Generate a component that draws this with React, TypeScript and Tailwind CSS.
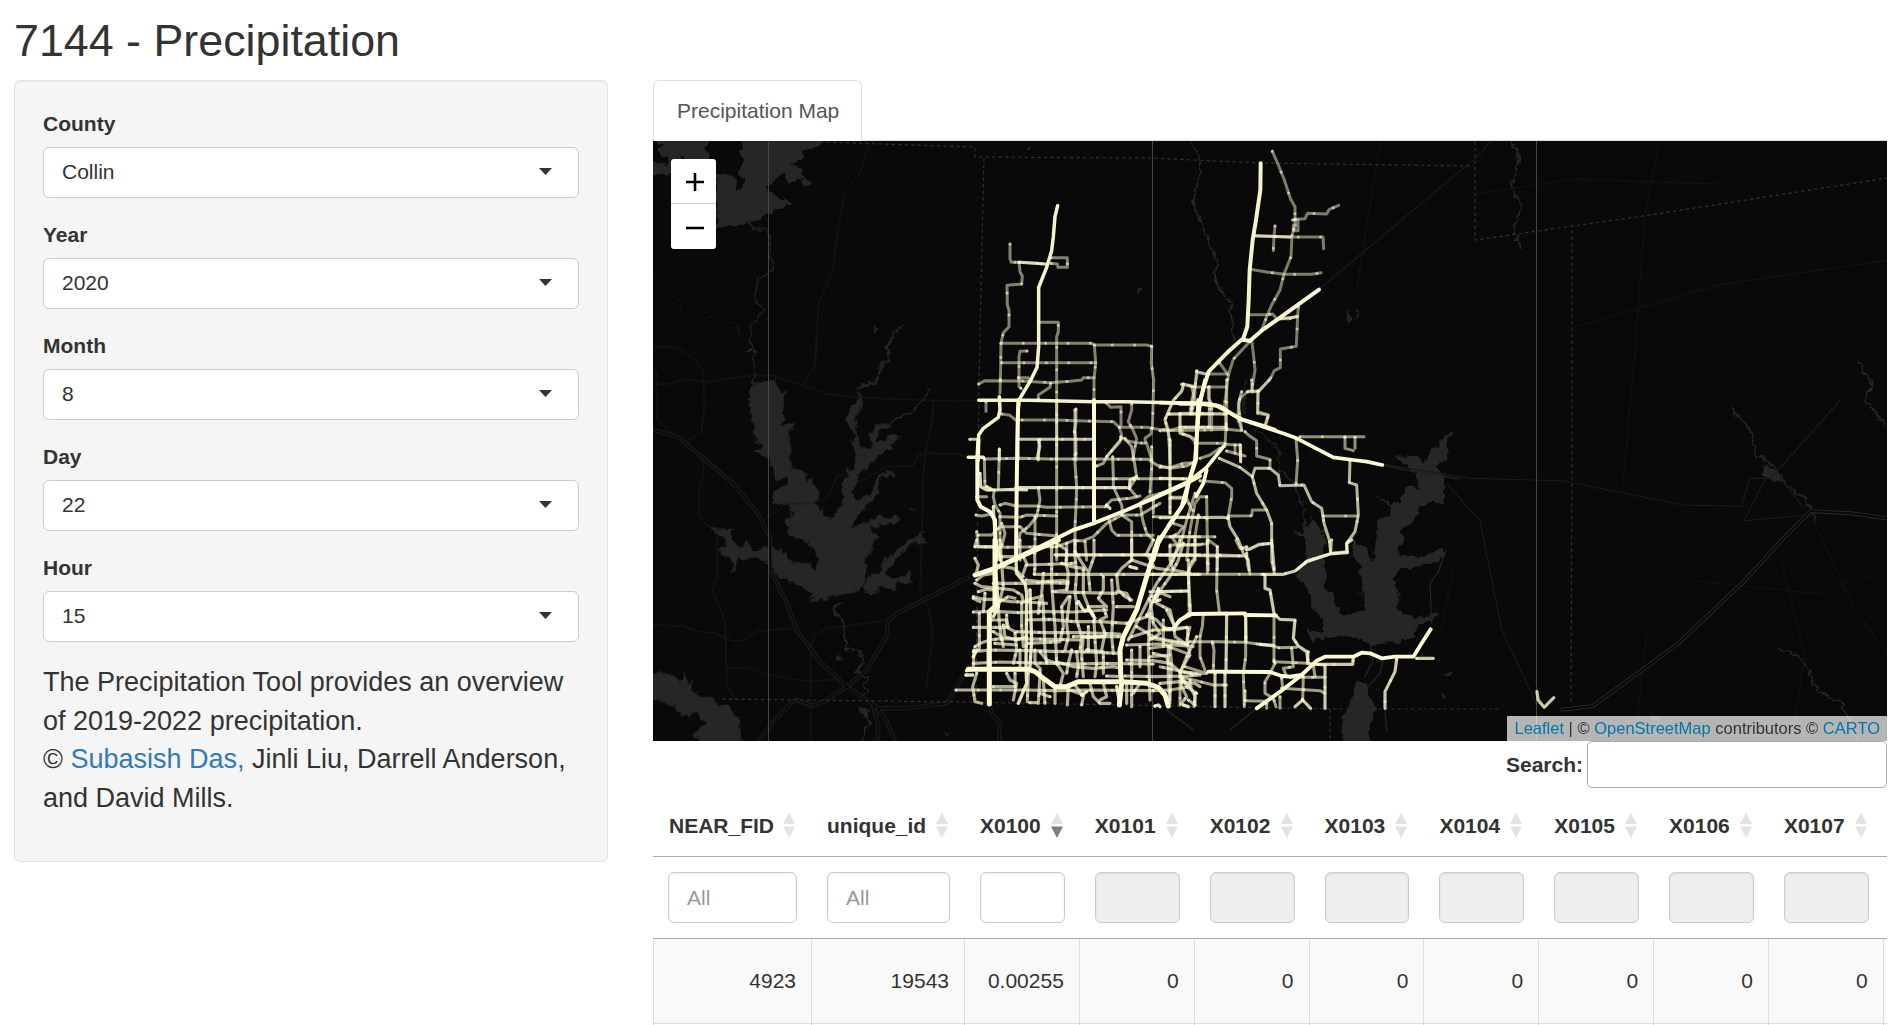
import React from "react";

type Pts = string[];

const Lines = ({ pts, w, o = 1, dots = false, color = "#fdfbd4" }: { pts: Pts; w: number; o?: number; dots?: boolean; color?: string }) => (
  <>
    {pts.map((p, i) => (
      <g key={i} fill="none" stroke={color} strokeLinecap="round" strokeLinejoin="round" strokeWidth={w}>
        <polyline points={p} opacity={o} />
        {dots && <polyline points={p} opacity={0.6} strokeDasharray="0 67" />}
      </g>
    ))}
  </>
);

/* Each tile has its own origin and a 1/3 px unit. */
const Tile = ({ x, y, children }: { x: number; y: number; children: React.ReactNode }) => (
  <g transform={`translate(${x} ${y}) scale(0.33333)`}>{children}</g>
);

/* North-west: Celina and Prosper, origin 950,180 */
const nwMinor: Pts = [
  "180,192 180,236 184,247 207,247 240,248 262,250 285,252",
  "303,233 352,233 352,262 324,262 322,252 300,250",
  "207,247 210,275 217,288 215,312 171,316 172,375 177,390 177,440 160,458 153,490 152,560 150,640",
  "267,427 325,427 325,455 320,470 320,840",
  "153,490 260,490 425,490 435,495 590,495 605,499",
  "605,499 604,550 611,600 610,650 607,745",
  "155,548 437,548",
  "433,495 437,548 432,600 432,660",
  "86,612 105,602 215,603 300,608 360,604 395,600 400,593 432,593",
  "231,513 210,514 207,530 207,620 214,626",
  "205,593 235,593 240,606",
  "302,610 300,622 265,645 265,658",
  "108,665 108,694",
  "155,702 180,706 197,720 318,720 378,722 490,725 508,742 515,765 510,785 470,830",
  "378,687 378,730 373,755 378,775 378,840",
  "468,668 482,682 513,680 513,735",
  "508,742 590,742 625,748 665,750 690,742 780,742",
  "545,672 545,690 535,725 548,748 560,775 548,840",
  "512,770 530,782 560,788 590,790 605,840",
  "605,745 603,762 585,775 587,788",
  "740,572 735,620 700,612 698,628 668,665 645,718 655,750 660,840",
  "660,702 780,702",
  "690,702 690,758 718,768 740,780",
  "735,620 735,640 725,670 720,700",
  "740,575 765,582",
];
const nwMid: Pts = [
  "60,778 85,778",
  "203,778 432,778",
  "268,782 265,840",
  "148,807 148,840",
  "207,247 285,252",
];
const nwMajor: Pts = [
  "323,77 315,110 310,170 305,212 290,262 266,322 266,500 261,562 240,605 208,658 203,700 203,840",
  "86,661 240,661 430,665 530,665 664,668 780,671",
  "148,650 150,690 145,712 100,745 86,765 85,840",
  "432,665 432,840",
  "55,832 100,832",
];

/* North-east: Anna and Melissa, origin 1180,140 */
const neMinor: Pts = [
  "277,34 295,75 313,120 332,178 345,200 345,260 336,285 333,350 312,402 300,450 275,495 262,525 245,570",
  "345,238 375,236 383,220 440,222 448,208 476,196",
  "338,240 354,240 354,272 340,272 340,255 352,255",
  "285,258 282,290 280,332",
  "221,287 330,291 429,291 431,326",
  "211,388 260,396 313,403 395,403 423,398",
  "203,524 260,524 278,522 290,536 330,536 352,528",
  "355,500 353,528 349,619 301,627 301,683 283,692 270,718 236,753",
  "215,600 220,640 225,690 215,752",
  "236,753 205,753 180,775 172,830 185,870",
  "233,753 233,820 265,826 258,855",
  "209,605 160,658 145,705 138,760 133,800 140,870",
  "118,668 145,705",
  "84,702 52,697 45,740 35,780 35,820",
  "85,702 140,702",
  "5,733 45,741 138,741",
  "0,820 60,820 138,822",
  "85,742 85,775 95,790 95,870",
];
const neMid: Pts = ["221,287 330,291", "300,536 352,530", "245,570 300,535", "0,862 140,862"];
const neMajor: Pts = [
  "242,70 241,150 228,240 218,300 209,390 206,480 202,560 190,595 150,630 118,662 86,695 75,730 62,775 55,820 52,870",
  "417,449 350,497 300,533 245,572 210,602 190,600",
  "0,791 60,791 110,797 138,812 185,838 250,858 285,870",
];

/* Central Frisco and McKinney, origin 940,380 */
const ceMinor: Pts = [
  "133,237 135,320",
  "178,210 175,325",
  "133,237 240,235 330,237 460,237 625,238 650,255 690,265 740,258 765,245",
  "350,60 350,540",
  "405,90 405,250 410,320 408,380 405,440 405,520",
  "295,180 300,200 290,235",
  "163,330 160,350 165,375 180,400 180,540",
  "228,378 290,378 320,382 500,380",
  "180,375 195,370 228,378",
  "295,325 300,360 290,410 265,440 240,460 235,500",
  "285,410 285,520",
  "180,410 240,412 260,405 350,408",
  "115,465 155,465 180,440 240,440 260,460 350,468",
  "110,455 115,500 165,502 350,500",
  "108,405 125,408 155,402",
  "518,230 520,290 520,320 545,375 548,400",
  "470,258 490,250 500,230 545,175",
  "555,175 575,200 582,240 590,290 568,325 590,350",
  "500,375 515,360 570,355 600,348",
  "635,200 635,260 630,340",
  "690,180 690,400",
  "462,296 740,296",
  "602,380 608,420 620,460 640,480",
  "640,410 780,412",
  "505,412 515,450 530,466 640,466",
  "600,370 625,350 700,330 740,310",
  "545,405 575,425 575,540",
  "350,500 400,482 430,482 460,470 500,430 545,405 600,405 660,370",
  "345,524 780,524",
  "380,490 380,540",
  "435,485 440,540",
  "695,352 730,352",
  "765,340 740,420 720,500 695,540",
  "700,430 730,440 715,460 695,470 715,500",
  "655,470 780,470",
  "690,495 780,495",
  "110,350 140,350",
  "185,430 195,460 185,500",
  "640,360 640,400",
];
const ceMid: Pts = [
  "120,280 122,320 140,330 165,330 225,328 260,330",
  "228,323 560,323",
  "568,325 570,300 590,290",
  "160,380 165,470 180,540",
  "500,375 510,385",
  "140,320 155,328",
];
const ceMajor: Pts = [
  "115,180 112,232 112,360 122,380 150,395 165,420 168,540",
  "235,60 232,180 230,330 228,540",
  "462,60 462,430",
  "780,288 740,310 640,355 560,390 460,430 400,450 300,500 215,540",
  "775,60 770,180 768,240 745,310 725,380 690,430 655,490 640,540",
];

/* East: McKinney, Princeton, origin 1160,380 */
const eaMinor: Pts = [
  "70,12 65,35 40,60 15,120 30,180 30,400",
  "95,20 105,60 95,95",
  "25,102 200,102",
  "60,102 60,160 90,170 105,185",
  "0,152 130,150 200,148 245,152",
  "148,20 148,140",
  "200,0 200,102 195,200",
  "245,35 235,70 240,110 245,150",
  "263,35 295,35 293,95 325,105 315,135",
  "327,0 298,32",
  "275,0 277,35",
  "105,190 195,190",
  "195,193 242,195 242,245",
  "200,213 255,228",
  "225,195 225,220",
  "255,155 265,165 290,182 290,228 330,238 330,265",
  "120,302 195,308 215,325 215,350 205,410",
  "140,350 120,350 105,370 90,450 80,540",
  "140,350 142,490 145,570",
  "205,408 275,407 277,390 320,390",
  "30,355 80,355 95,390",
  "420,170 520,170 612,170",
  "490,408 592,408",
  "408,175 413,240 408,315",
  "585,172 585,205",
  "555,172 555,205 580,212",
  "180,525 245,527",
  "245,505 270,508 295,493 335,490",
  "145,480 172,500 172,570",
  "30,470 165,470",
  "60,495 135,492 145,490",
  "0,525 180,525",
  "115,405 105,470 105,540 85,570",
  "0,262 30,262 70,250 100,248",
  "120,235 150,225 180,205",
];
const eaMid: Pts = [
  "178,235 240,262 277,290 290,340 320,390 335,430 335,480 343,570",
  "277,290 285,265 330,265 355,285 360,317 432,315 455,365 485,385 492,430 508,480 512,520",
  "570,240 568,308 590,315 595,405 585,455 560,490 560,515 515,520 440,543 410,570",
  "205,415 210,440 235,480 250,520 265,540 268,570",
  "0,295 85,297",
  "0,413 190,412 205,415",
  "240,195 242,245",
];
const eaMajor: Pts = [
  "0,68 140,71 180,78 235,115 310,140 375,162 410,175 520,232 580,240 620,245 667,255",
  "135,0 120,70 112,140 105,240 88,300 75,365 40,420 0,475",
  "0,343 85,305 140,262 190,200",
  "140,270 130,310 108,350",
];

/* Plano and north Dallas, origin 940,540 */
const plMinor: Pts = [
  "105,20 160,20", "110,0 105,20", "105,55 115,75 110,95",
  "180,0 185,70 190,140 175,200 178,250 185,300",
  "110,120 130,105 160,100",
  "105,130 125,140 180,145 220,150 245,165 250,185",
  "160,130 260,130 330,128 380,130",
  "115,155 140,148 160,150",
  "100,170 130,178 160,178 215,185 260,186 320,190",
  "100,216 160,214 240,218 300,214 400,216 500,210",
  "100,262 200,262 225,275 320,278 420,278 540,282",
  "105,320 120,310 150,300 180,296 350,298 420,300",
  "100,335 150,330 270,332 340,334 440,336 540,340",
  "100,370 180,366 330,370 420,372 480,370 640,372",
  "48,450 260,450 350,452 440,450 640,452",
  "102,330 100,385", "110,400 98,440 105,485 125,490",
  "118,220 118,330", "135,160 130,215", "100,175 120,185",
  "190,80 220,85 250,110", "185,50 250,50 260,70 250,100",
  "240,0 240,60", "260,75 350,72 400,70",
  "283,20 285,80 283,100", "283,103 640,103", "310,100 305,160 310,200 315,330 320,370",
  "335,20 335,70 335,130 340,200 345,260 350,370",
  "350,10 380,30 378,70 385,100 380,150",
  "405,0 405,50 410,100 405,160 410,190",
  "350,45 640,45", "462,0 462,50 445,100 450,150",
  "405,35 430,75 440,90", "365,70 395,80 430,85",
  "258,120 300,125 370,122 385,125 380,150 340,155 430,158 530,160",
  "260,180 300,170 295,220",
  "260,240 330,238 400,245 480,245 560,250",
  "265,310 360,305 370,260 365,200 385,170",
  "285,330 285,370 300,385 300,400",
  "300,335 320,360 350,370 370,400 360,440",
  "390,170 380,250 385,290 375,330",
  "410,190 410,240 425,290 420,330",
  "430,90 430,160 445,200 460,230",
  "445,200 490,200 500,230 480,240 495,280 485,330",
  "490,110 490,150 475,175 500,200",
  "515,120 520,200 515,290 520,340",
  "530,105 535,150 555,170 575,180",
  "575,0 575,60 545,85 530,105",
  "462,240 465,300 470,370 465,410",
  "430,290 425,350 430,410",
  "400,290 510,290 540,290",
  "445,260 445,335",
  "395,330 385,370 380,400",
  "410,335 415,380 410,410",
  "350,365 400,380 460,385 520,380 545,385",
  "440,330 490,335 490,400",
  "570,180 560,160 530,155", "530,200 580,200",
  "575,60 620,75 650,85 690,90",
  "640,0 620,40 640,75", "690,20 690,60 700,90 750,100",
  "720,0 700,60 650,130 600,230 565,300",
  "730,10 715,60 690,110 640,180 620,230",
  "640,103 780,103", "655,155 740,153", "745,60 748,220",
  "655,145 650,190 690,210 700,250", "635,170 665,160 690,170",
  "620,225 650,240 670,262 700,270 740,262",
  "590,260 640,290 680,300 740,310", "680,210 700,250 705,290 735,310",
  "630,180 640,250 660,280 630,300", "560,315 660,312 740,318",
  "630,220 625,320 630,480", "575,330 575,500",
  "600,320 600,380", "560,360 640,362 690,370 720,395 770,400",
  "555,408 640,410 740,408 780,405", "500,408 545,410",
  "685,320 685,420 690,490", "640,340 680,350 685,370",
  "770,290 740,350 720,400 740,440 770,460",
  "743,265 743,310", "560,250 620,230", "575,290 640,270 690,270",
  "660,430 720,425 765,430 780,440",
  "640,452 690,450", "725,415 725,440 740,470 720,495",
  "265,400 262,485", "300,400 295,490", "310,420 315,490", "345,440 345,490",
  "385,440 382,495", "405,435 430,470 425,495", "450,430 460,470 480,490 510,490",
  "270,488 290,488", "430,465 390,450", "490,430 500,470 480,480", "330,470 300,460",
  "190,255 195,290 230,300 260,290", "200,225 200,260", "225,280 230,330 220,370",
  "155,240 200,240 205,262", "160,275 185,290 190,320", "165,310 230,315",
  "200,400 210,420 230,430 220,480", "225,400 225,440", "160,440 225,440",
  "150,215 170,190 205,170 225,175",
  "240,330 240,380", "245,190 245,260 250,320",
  "560,430 560,490", "600,430 580,460", "745,480 765,495", "765,460 765,495",
];
const plMid: Pts = [
  "228,60 230,100 255,130 260,160 258,380 260,430 235,490",
  "270,150 275,300 270,380",
  "145,330 145,380", "78,405 98,405", "80,392 100,388",
  "415,185 430,210 450,212 465,235", "445,205 460,225",
  "440,292 495,290", "570,80 590,85",
  "745,222 715,245 700,265 670,268",
  "100,350 110,330", "655,150 640,185 660,180",
  "165,60 175,200 160,230", "530,440 540,495", "645,498 655,495 660,500",
  "730,495 745,500", "425,465 440,455",
];
const plMajor: Pts = [
  "165,0 165,200 148,215 148,492",
  "105,105 165,85 230,55 355,0",
  "655,0 620,110 590,210 550,290 540,330 542,400 545,430 538,495",
  "85,388 265,388 285,395 310,415 345,440 380,440 415,425 545,425 620,430 655,442 675,465 685,498",
];

/* East Plano, Wylie, Lavon, origin 1150,540 */
const seMinor: Pts = [
  "135,0 135,50 120,75 115,110 118,160 122,215",
  "172,0 172,100", "202,20 200,150 208,215",
  "0,103 340,103", "0,155 115,153", "0,45 200,48", "200,48 290,48",
  "290,20 270,25 258,0", "365,0 365,60 373,100", "290,30 330,14 365,10",
  "290,40 293,75 300,102",
  "160,222 157,260 150,290 150,350 165,390",
  "75,265 120,262 110,300 120,345 90,395 90,490",
  "120,305 200,305 285,307 330,313 370,318 385,323 440,322",
  "188,310 192,330 190,390", "287,225 287,350 280,400 283,500",
  "372,225 372,365", "372,365 475,370",
  "105,380 170,400 130,402 30,380", "90,410 190,435 230,435",
  "375,370 360,400 345,425 345,460 370,475 378,500",
  "425,325 430,380 400,385 410,410", "420,412 525,412",
  "395,445 510,452 525,460", "395,415 398,445",
  "490,375 495,410", "285,482 350,484",
  "285,452 285,482", "350,490 350,505", "390,470 390,505",
  "460,410 458,480", "545,0 542,38", "475,335 472,370 520,375",
  "60,320 65,370 60,480", "0,295 90,310 130,320",
  "0,325 50,318 110,340", "0,350 60,345", "40,240 40,320",
  "120,420 125,450 135,470 132,500", "60,450 120,440 100,420",
];
const seMid: Pts = [
  "340,103 400,103 435,93 470,65 540,42 592,38 590,10 605,0",
  "345,105 345,145 360,150 372,220",
  "230,225 228,390", "287,225 288,305",
  "375,225 390,238 435,240 430,295 445,318 470,335 475,370",
  "195,400 195,500", "225,400 225,500", "525,375 525,505",
  "740,358 735,395 705,455 705,505", "800,355 850,355",
  "485,373 608,373 610,352", "458,480 435,500", "458,480 482,505",
  "330,313 370,316",
];
const seMajor: Pts = [
  "75,260 90,240 125,222 285,220", "285,225 378,226",
  "175,395 360,396 395,408 420,410 455,405",
  "320,505 400,448 455,405 500,362 525,350 610,350 635,338 660,340 695,355 735,350 790,350 815,310 842,268",
];

const basemapRoads: Pts = [
  "40,132 80,133 140,117 195,126 350,105 400,108 470,130 560,162 650,172 820,180 1010,183",
  "528,0 525,80 490,128",
  "40,20 110,22 160,55 190,90 193,200 185,275 145,302",
  "40,90 52,98 52,240 90,275",
  "190,370 188,420 178,440 178,520 190,545 230,575 232,700 218,755 240,800 256,850 260,1035 285,1075",
  "40,855 130,858 180,876 220,878 280,903 310,900 350,875 450,865",
  "258,983 330,985 360,998 440,1015 500,1024 600,1018",
  "380,530 420,510 430,492 520,490 560,475 590,410 620,400",
  "650,430 740,380 820,378 835,345 870,340 950,342 985,350",
  "880,180 878,240 860,310 850,400 845,600 840,760 865,800 878,880 858,1050",
  "730,843 560,865 520,890 512,920 512,1200",
];
const highways: Pts = [
  "40,270 110,288 190,355 280,430 350,515 390,590 392,690 445,800 470,870 540,965 620,1040 710,1100 740,1145 765,1200",
  "360,1200 400,1145 465,1078 520,1098 560,1080 620,1040 680,990 740,890 745,840 780,815 860,775 985,712",
  "715,1105 800,1105 920,1090 950,1040 985,980",
  "1050,1090 1055,1120 1080,1150 1078,1200",
  "700,1100 715,1160 712,1200",
];
const streams: Pts = [
  "325,0 345,35 340,70 348,110 335,140 348,170 345,200",
  "755,0 740,20 745,60 715,95 712,130 650,142",
  "862,148 855,180 820,210 790,225 745,255",
  "600,782 585,800 590,820 612,850 612,890 620,930 665,940 668,970 650,1000 685,1010 670,1030 690,1055 670,1070",
  "660,1105 685,1110 675,1135 695,1150 672,1170 670,1200",
];

/* Outer east, in a coarser unit */
const outerRoads: Pts = [
  "1090,238 1219,130 1260,85 1268,116",
  "1140,383 1215,395 1290,397 1390,417 1438,418 1445,395 1462,395 1520,330",
  "1195,400 1222,430 1240,520 1268,580",
  "1458,395 1440,430 1495,425",
  "1470,395 1490,420",
];
const faintRoads: Pts = [
  "1219,160 1300,148 1420,152", "1300,270 1420,235 1558,215",
  "1370,116 1358,180 1350,290 1340,400", "1200,470 1190,520", "1140,116 1120,240",
  "1400,480 1500,490 1558,470", "1360,520 1350,611", "1470,460 1490,540 1480,611",
  "1495,425 1530,500 1558,540",
];
const outerHighways: Pts = ["1290,586 1315,583 1385,532 1440,480 1472,445 1495,422 1530,424 1558,428"];
const outerStreams: Pts = [
  "983,116 992,135 985,165 992,185 1005,215 1003,232 1016,250 1018,280",
  "1248,116 1254,130 1248,155 1256,170 1250,190 1254,204",
  "1430,337 1445,355 1450,375 1465,385 1475,400 1492,415 1500,430",
  "1535,300 1545,315 1540,330 1552,345 1558,352",
  "1470,535 1490,545 1500,570 1520,580 1535,611",
];

const MapView = () => (
  <svg className="block h-[600px] w-[1234px] bg-[#090909]" viewBox="653 141 1234 600">
    <defs>
      <filter id="shore" filterUnits="userSpaceOnUse" x="640" y="130" width="1260" height="620">
        <feTurbulence type="fractalNoise" baseFrequency="0.13" numOctaves="2" seed="4" />
        <feDisplacementMap in="SourceGraphic" scale="9" xChannelSelector="R" yChannelSelector="G" />
      </filter>
    </defs>
    <g fill="#262626" filter="url(#shore)">
      <Tile x={640} y={70}>
        <path d="M20,190 L205,190 200,230 208,260 205,305 170,300 125,262 100,290 85,318 70,305 20,310 20,265 75,285 90,270 50,245 70,225Z" />
        <path d="M300,190 L560,190 545,213 522,240 482,248 490,262 455,285 480,295 495,330 515,345 500,350 485,330 455,340 430,310 385,345 385,370 440,390 452,402 400,425 350,450 300,465 230,473 228,305 265,310 282,330 285,362 305,360 312,345 300,320 302,290 315,270 300,250 310,235Z" />
        <path d="M700,772 L712,782 706,792Z M315,845 L340,838 335,850Z M1166,230h10v10h-10Z" />
      </Tile>
      <Tile x={640} y={340}>
        <path d="M358,125 L375,130 400,115 410,135 432,155 428,260 462,250 450,280 455,385 490,395 505,425 520,410 522,440 538,465 525,485 540,510 550,500 552,525 570,530 575,542 600,500 607,470 605,440 622,400 620,380 640,390 655,345 635,310 645,290 630,260 620,240 632,200 655,180 655,142 668,185 662,215 645,225 648,280 660,320 690,325 690,280 705,255 740,248 745,262 715,275 710,310 740,295 765,280 785,285 740,330 710,350 680,380 660,395 655,430 635,450 650,480 690,470 703,430 720,400 750,390 768,405 725,412 718,465 700,475 670,500 645,545 620,562 690,545 720,523 730,535 770,530 790,540 730,555 690,562 700,580 714,590 690,640 675,660 675,735 645,758 530,783 500,772 515,760 470,735 440,725 400,700 385,665 340,655 290,660 280,700 275,660 255,655 230,625 258,622 250,590 210,572 205,562 275,567 278,605 300,625 320,605 340,630 385,620 425,625 440,655 470,670 500,670 528,695 538,650 500,610 465,595 445,580 450,560 435,545 455,530 445,490 400,490 400,450 440,435 440,415 405,420 385,350 338,335 372,320 345,305 335,230 338,200 325,180 335,135Z" />
        <path d="M680,712 L715,700 735,655 770,635 800,600 830,590 855,572 850,595 862,612 820,605 780,650 735,700 750,718 785,710 810,685 820,735 770,725 765,750 720,740 700,770 675,760Z" />
        <path d="M20,990 L90,1000 120,1025 135,995 140,1030 160,1020 150,1050 205,1072 270,1100 300,1140 305,1220 235,1220 150,1185 200,1150 170,1120 120,1130 105,1100 20,1070Z" />
        <path d="M590,940l10,10 2,20 -12,-15Z M905,1172l20,5 -10,8Z M808,508l15,0 -5,8Z M658,1105l20,5 5,40 -15,-20Z" />
      </Tile>
      <Tile x={1160} y={380}>
        <path d="M702,225 L765,228 790,250 815,210 840,195 850,165 872,158 860,200 862,240 830,262 852,290 852,370 820,365 780,380 770,410 725,448 730,480 715,500 720,530 780,535 850,500 860,515 840,545 715,570 700,600 720,640 710,690 760,710 835,700 830,715 770,740 765,770 710,790 630,792 560,765 500,775 460,780 436,748 490,760 490,715 460,690 455,640 415,600 412,560 440,540 435,480 402,455 430,460 455,415 490,450 495,630 520,640 525,670 555,705 615,690 610,660 590,625 612,650 600,560 575,520 580,470 600,490 640,545 655,425 688,410 690,375 640,345 700,370 722,365 730,320 775,320 770,280Z" />
        <path d="M590,900 L618,905 625,950 648,985 630,1050 630,1100 545,1100 550,1010 580,950Z" />
        <path d="M855,885l20,-4 -10,8Z M840,945l18,6Z" stroke="#262626" strokeWidth="4" />
      </Tile>
      <path d="M1137,292l4,-3 1,3Z M1347,310l3,10 -2,2Z M1355,318l4,-7Z M1764,465l10,5 8,8 -4,4 -14,-6Z M1650,718l5,-3 4,6Z" stroke="#262626" />
    </g>

    <g filter="url(#shore)">
      <Tile x={640} y={340}>
        <Lines pts={streams} w={5} color="#262626" />
      </Tile>
      <Tile x={640} y={70}>
        <Lines pts={["325,460 335,478 378,480 390,500 390,560 400,595 355,630 345,680 372,720 330,770 328,820 345,850", "788,762 740,825 742,860 715,900 712,935 650,948"]} w={4} color="#2a2a2a" />
        <Lines pts={["40,610 80,650 130,720 175,760 215,738 290,760 305,820"]} w={3} color="#151515" />
      </Tile>
      <g transform="scale(1.21110)">
        <Lines pts={outerStreams} w={1.4} color="#262626" />
      </g>
      <Tile x={1160} y={380}>
        <Lines pts={["265,135 330,185 355,205 360,270 400,310 420,360 435,400 440,445", "255,0 255,100"]} w={4} color="#222222" />
      </Tile>
    </g>
    <Tile x={640} y={340}>
      <Lines pts={basemapRoads} w={3} color="#1c1c1c" />
      <Lines pts={highways} w={11} color="#2a2a2a" />
      <Lines pts={highways} w={6} color="#070707" />
    </Tile>
    <Tile x={640} y={70}>
      <Lines pts={["685,225 660,310 615,360 590,500 580,600 535,700 528,880"]} w={3} color="#1a1a1a" />
    </Tile>
    <g transform="scale(1.21110)">
      <Lines pts={faintRoads} w={0.9} color="#131313" />
      <Lines pts={outerRoads} w={0.9} color="#1b1b1b" />
      <Lines pts={outerHighways} w={3.2} color="#2a2a2a" />
      <Lines pts={outerHighways} w={1.7} color="#070707" />
    </g>
    <Tile x={1150} y={540}>
      <Lines pts={["888,30 865,95 840,130 845,250", "700,355 690,400 650,445", "660,310 670,360 645,410", "705,510 710,570", "320,505 240,570", "50,510 90,540 130,570"]} w={4} color="#242424" />
    </Tile>
    <Tile x={1160} y={380}>
      <Lines pts={["667,255 760,275 900,297"]} w={4} color="#222222" />
    </Tile>

    <g fill="none" stroke="#2f2f2f" strokeWidth="1.2" strokeDasharray="3.5 3">
      <path d="M820,142 L975,147 975,157 1150,158 1260,163 1474,166" />
      <path d="M984,158 L979,380 976,700" />
      <path d="M1475,141 L1475,240 1650,215 1887,178" />
      <path d="M1572,230 L1572,420 1571,705" />
      <path d="M722,699 L960,702 1180,706 1330,709 1500,709" />
      <path d="M1330,709 L1330,741" />
    </g>
    <g fill="#464646">
      <rect x="768" y="141" width="1" height="600" />
      <rect x="1152" y="141" width="1" height="600" />
      <rect x="1536" y="141" width="1" height="600" />
    </g>

    <Tile x={950} y={180}>
      <Lines pts={nwMinor} w={9} o={0.5} dots />
      <Lines pts={nwMid} w={9} o={0.75} dots />
      <Lines pts={nwMajor} w={10.5} o={0.97} />
    </Tile>
    <Tile x={1180} y={140}>
      <Lines pts={neMinor} w={9} o={0.48} dots />
      <Lines pts={neMid} w={9} o={0.7} dots />
      <Lines pts={neMajor} w={12} o={0.97} />
    </Tile>
    <Tile x={940} y={380}>
      <Lines pts={ceMinor} w={9} o={0.6} dots />
      <Lines pts={ceMid} w={9.5} o={0.85} dots />
      <Lines pts={ceMajor} w={12} />
    </Tile>
    <Tile x={1160} y={380}>
      <Lines pts={eaMinor} w={9} o={0.55} dots />
      <Lines pts={eaMid} w={9} o={0.72} dots />
      <Lines pts={eaMajor} w={11} />
    </Tile>
    <Tile x={940} y={540}>
      <Lines pts={plMinor} w={9.5} o={0.68} dots />
      <Lines pts={plMid} w={10} o={0.88} dots />
      <Lines pts={plMajor} w={15} />
    </Tile>
    <Tile x={1150} y={540}>
      <Lines pts={seMinor} w={9} o={0.62} dots />
      <Lines pts={seMid} w={9.5} o={0.8} dots />
      <Lines pts={seMajor} w={11.5} />
    </Tile>
    <g transform="scale(1.21110)">
      <Lines pts={["1269,571 1270,578 1275,584 1283,576"]} w={2.6} o={0.8} />
    </g>
  </svg>
);

const fields = [
  { label: "County", value: "Collin" },
  { label: "Year", value: "2020" },
  { label: "Month", value: "8" },
  { label: "Day", value: "22" },
  { label: "Hour", value: "15" },
];

const columns = [
  { name: "NEAR_FID", value: "4923", filter: "All" },
  { name: "unique_id", value: "19543", filter: "All" },
  { name: "X0100", value: "0.00255", filter: "", sorted: true },
  { name: "X0101", value: "0" },
  { name: "X0102", value: "0" },
  { name: "X0103", value: "0" },
  { name: "X0104", value: "0" },
  { name: "X0105", value: "0" },
  { name: "X0106", value: "0" },
  { name: "X0107", value: "0" },
];

const SortIcon = ({ active }: { active?: boolean }) => (
  <svg className="mr-[16px] h-[25px] w-[12px] shrink-0" viewBox="0 0 12 25">
    <path d="M6 0 L12 11 H0Z" fill="#e3e3e3" />
    <path d="M0 13.5 H12 L6 25Z" fill={active ? "#7d7d7d" : "#e3e3e3"} />
  </svg>
);

const Sidebar = () => (
  <aside className="h-[782px] w-[594px] shrink-0 rounded-md border border-[#e3e3e3] bg-[#f5f5f5] px-[28px] pt-[28px] shadow-[inset_0_1px_1px_rgba(0,0,0,0.05)]">
    {fields.map((f) => (
      <div key={f.label} className="mb-[22px] flex h-[89px] flex-col">
        <label className="mb-[8px] h-[30px] font-bold leading-[30px]">{f.label}</label>
        <div className="flex h-[51px] w-[536px] items-center justify-between rounded-md border border-[#ccc] bg-white pb-[2px] pl-[18px] pr-[26px]">
          <span className="leading-[30px]">{f.value}</span>
          <svg className="h-[7px] w-[13px]" viewBox="0 0 14 8" preserveAspectRatio="none">
            <path d="M0 0 H14 L7 8Z" fill="#333" />
          </svg>
        </div>
      </div>
    ))}
    <p className="-mt-px whitespace-nowrap text-[27px] leading-[38.57px]">
      The Precipitation Tool provides an overview
      <br />
      of 2019-2022 precipitation.
      <br />© <a className="text-[#337ab7]">Subasish Das,</a> Jinli Liu, Darrell Anderson,
      <br />
      and David Mills.
    </p>
  </aside>
);

const DataTable = () => (
  <table className="w-[1234px] table-fixed border-separate border-spacing-0">
    <colgroup>
      <col className="w-[158px]" />
      <col className="w-[153px]" />
      {columns.slice(2).map((c) => (
        <col key={c.name} className="w-[114.85px]" />
      ))}
      <col />
    </colgroup>
    <thead>
      <tr>
        {columns.map((c) => (
          <th key={c.name} className="h-[69px] border-b border-[#aaa] p-0 pl-[16px] text-left align-middle font-bold">
            <div className="flex items-center justify-between pt-[7px]">
              <span className="leading-[30px]">{c.name}</span>
              <SortIcon active={c.sorted} />
            </div>
          </th>
        ))}
        <th className="border-b border-[#aaa] p-0" />
      </tr>
      <tr>
        {columns.map((c) => (
          <td key={c.name} className="h-[82px] border-b border-[#aaa] py-0 pl-[16px] pr-[14px] first:pl-[15px]">
            <div
              className={
                c.filter === undefined
                  ? "flex h-[51px] items-center rounded-md border border-[#ccc] bg-[#eee] shadow-[inset_0_1px_2px_rgba(0,0,0,0.075)]"
                  : "flex h-[51px] items-center rounded-md border border-[#ccc] bg-white pl-[18px] text-[#999] shadow-[inset_0_1px_2px_rgba(0,0,0,0.075)]"
              }
            >
              {c.filter}
            </div>
          </td>
        ))}
        <td className="border-b border-[#aaa] p-0" />
      </tr>
    </thead>
    <tbody>
      <tr className="bg-[#f9f9f9]">
        {columns.map((c) => (
          <td key={c.name} className="h-[85px] border-b border-l border-[#ddd] p-0 pr-[15px] text-right">
            {c.value}
          </td>
        ))}
        <td className="border-b border-l border-[#ddd] p-0" />
      </tr>
      <tr>
        {columns.map((c) => (
          <td key={c.name} className="h-[84px] border-l border-[#ddd] p-0" />
        ))}
        <td className="border-l border-[#ddd] p-0" />
      </tr>
    </tbody>
  </table>
);

export default function App() {
  return (
    <div className="h-[1025px] w-full overflow-hidden bg-white pl-[14px] font-['Liberation_Sans',Arial,sans-serif] text-[21px] text-[#333]">
      <h1 className="h-[80px] pt-[15px] text-[44.8px] font-normal leading-[50px]">7144 - Precipitation</h1>
      <div className="flex gap-[45px]">
        <Sidebar />
        <main className="w-[1234px] shrink-0">
          <div className="flex h-[61px] border-b border-[#ddd]">
            <div className="-mb-px w-[209px] rounded-t-md border border-b-0 border-[#ddd] bg-white pl-[23px] pt-[15px] leading-[30px] text-[#555]">
              <span className="whitespace-nowrap">Precipitation Map</span>
            </div>
          </div>
          <div className="relative h-[600px] overflow-hidden">
            <MapView />
            <div className="absolute left-[18px] top-[18px] w-[45px] overflow-hidden rounded-[3px] bg-white">
              <button className="flex h-[45px] w-full items-center justify-center border-b border-[#ccc] pl-[2px] pt-[2px]">
                <svg className="h-[18px] w-[18px]" viewBox="0 0 18 18">
                  <path d="M9 0V18M0 9H18" stroke="#000" strokeWidth="2.6" />
                </svg>
              </button>
              <button className="flex h-[45px] w-full items-center justify-center pl-[2px] pt-[2px]">
                <svg className="h-[18px] w-[18px]" viewBox="0 0 18 18">
                  <path d="M0 9H18" stroke="#000" strokeWidth="2.4" />
                </svg>
              </button>
            </div>
            <div className="absolute bottom-0 right-0 h-[25px] whitespace-nowrap bg-white/70 px-[7px] text-[16.5px] leading-[25px]">
              <a className="text-[#0078a8]">Leaflet</a> | © <a className="text-[#0078a8]">OpenStreetMap</a> contributors ©{" "}
              <a className="text-[#0078a8]">CARTO</a>
            </div>
          </div>
          <div className="flex h-[47px] items-center justify-end">
            <span className="mr-[4px] font-bold">Search:</span>
            <div className="h-[47px] w-[300px] rounded-[5px] border border-[#aaa] bg-white" />
          </div>
          <DataTable />
        </main>
      </div>
    </div>
  );
}
